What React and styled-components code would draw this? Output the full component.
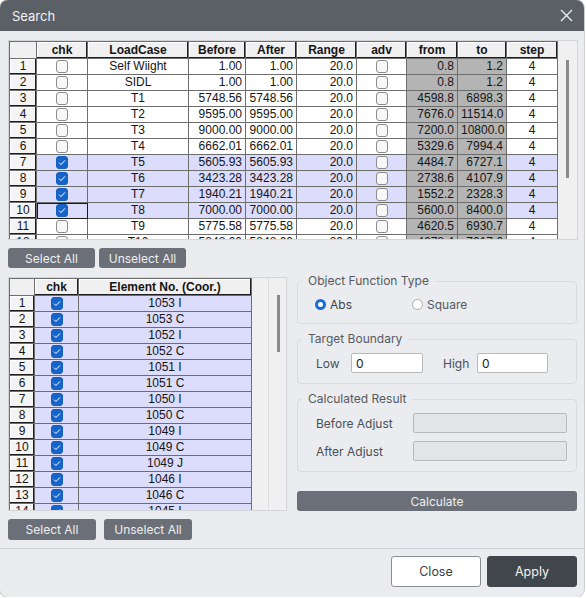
import React from "react";
import styled, { createGlobalStyle } from "styled-components";

const GlobalStyle = createGlobalStyle`
  html, body {
    margin: 0;
    padding: 0;
    background: #ffffff;
  }
  * {
    box-sizing: border-box;
  }
`;

const Window = styled.div`
  width: 584px;
  height: 597px;
  background: #ebecef;
  border-radius: 8px;
  box-shadow: 0 0 0 1px #cfd0d3;
  display: flex;
  flex-direction: column;
  overflow: hidden;
  font-family: Inter, "Noto Sans", sans-serif;
`;

const TitleBar = styled.div`
  height: 31px;
  flex: none;
  background: #5b6067;
  display: flex;
  align-items: center;
  justify-content: space-between;
  padding: 0 10px 0 12px;
  color: #f2f2f2;
  font-size: 13px;
`;

const CloseX = styled.button`
  border: 0;
  background: transparent;
  padding: 0;
  width: 16px;
  height: 16px;
  display: flex;
  align-items: center;
  justify-content: center;
  cursor: pointer;
`;

const Body = styled.div`
  padding: 9px 8px 8px 8px;
  display: flex;
  flex-direction: column;
`;

const Frame = styled.div`
  width: ${({ $w }) => $w}px;
  height: ${({ $h }) => $h}px;
  border: 1px solid #d4d5d8;
  background: #f0f0f0;
  display: flex;
  overflow: hidden;
  flex: none;
`;

const Table = styled.div`
  border-left: 1px solid #6e6e6e;
  border-top: 1px solid #6e6e6e;
  align-self: flex-start;
  background: #ffffff;
  font-family: "Liberation Sans", Arial, sans-serif;
  font-size: 12px;
  color: #151515;
`;

const Row = styled.div`
  display: grid;
  grid-template-columns: ${({ $cols }) => $cols};
  background: ${({ $sel }) => ($sel ? "#dcdcfc" : "#ffffff")};
`;

const Cell = styled.div`
  height: 16px;
  line-height: 15px;
  border-right: 1px solid #6e6e6e;
  border-bottom: 1px solid #6e6e6e;
  white-space: nowrap;
  overflow: hidden;
  padding: 0 3px;
  text-align: ${({ $align }) => $align || "center"};
  background: ${({ $shade }) => ($shade ? "#b4b4b4" : "transparent")};
  display: ${({ $box }) => ($box ? "flex" : "block")};
  align-items: center;
  justify-content: center;
  outline: ${({ $focus }) => ($focus ? "1px solid #1a1a1a" : "none")};
  outline-offset: -1px;
`;

const HeadCell = styled.div`
  height: 17px;
  line-height: 16px;
  border-right: 1px solid #6e6e6e;
  border-bottom: 1px solid #6e6e6e;
  background: #f0f0f0;
  font-weight: bold;
  text-align: center;
  white-space: nowrap;
  overflow: hidden;
  box-shadow: ${({ $plain }) =>
    $plain ? "none" : "inset -1px -1px 0 #1e1e1e, inset 1px 1px 0 #ffffff"};
`;

const RowHead = styled(HeadCell)`
  height: 16px;
  line-height: 15px;
  font-weight: normal;
  background: #f4f4f4;
`;

const Check = styled.span`
  width: 12px;
  height: 13px;
  border-radius: 3px;
  border: 1px solid ${({ $on }) => ($on ? "#1560c0" : "#8c8c8c")};
  background: ${({ $on }) => ($on ? "#1565c8" : "#f7f7f7")};
  display: flex;
  align-items: center;
  justify-content: center;
`;

const Track = styled.div`
  flex: 1;
  position: relative;
`;

const TrackLine = styled.div`
  position: absolute;
  top: 0;
  bottom: 0;
  left: ${({ $x }) => $x}px;
  width: 1px;
  background: #dedede;
`;

const Thumb = styled.div`
  position: absolute;
  left: ${({ $x }) => $x}px;
  top: ${({ $top }) => $top}px;
  height: ${({ $h }) => $h}px;
  width: 3px;
  background: #8a8a8a;
`;

const ButtonRow = styled.div`
  display: flex;
  gap: ${({ $gap }) => $gap}px;
  margin-top: 8px;
`;

const GrayButton = styled.button`
  width: ${({ $w }) => $w}px;
  height: ${({ $h }) => $h || 20}px;
  border: 0;
  border-radius: 3px;
  background: #6b7078;
  color: #eeeeee;
  font-family: Inter, "Noto Sans", sans-serif;
  font-size: 12px;
  padding: 0;
  cursor: pointer;
`;

const CalcButton = styled(GrayButton)`
  width: 280px;
  margin-top: 19px;
`;

const Lower = styled.div`
  display: flex;
  gap: 10px;
  margin-top: 9px;
`;

const LeftCol = styled.div`
  width: 279px;
  display: flex;
  flex-direction: column;
`;

const RightCol = styled.div`
  width: 280px;
  display: flex;
  flex-direction: column;
`;

const Group = styled.fieldset`
  margin: ${({ $mt }) => $mt || 0}px 0 0 0;
  padding: 10px 9px 10px 17px;
  border: 1px solid #d9dadd;
  border-radius: 4px;
  min-width: 0;
`;

const Legend = styled.legend`
  padding: 0 5px 0 6px;
  margin-left: -13px;
  font-size: 12px;
  line-height: 8px;
  color: #555a60;
`;

const RadioLine = styled.div`
  display: flex;
  align-items: center;
  height: 18px;
`;

const RadioOption = styled.label`
  width: ${({ $w }) => $w}px;
  display: flex;
  align-items: center;
  gap: 4px;
  font-size: 12px;
  color: ${({ $on }) => ($on ? "#3d4248" : "#555a60")};
`;

const RadioDot = styled.span`
  width: 11px;
  height: 11px;
  border-radius: 50%;
  background: #ffffff;
  border: ${({ $on }) => ($on ? "3px solid #1a6ed8" : "1px solid #a8a8a8")};
`;

const FieldLine = styled.div`
  display: flex;
  align-items: center;
  height: 20px;
  margin-top: ${({ $mt }) => $mt || 0}px;
`;

const FieldLabel = styled.span`
  width: ${({ $w }) => $w}px;
  font-size: 12px;
  color: #4a4f55;
  padding-left: 1px;
`;

const TextInput = styled.input`
  width: ${({ $w }) => $w}px;
  height: 20px;
  border: 1px solid #b7b9bd;
  border-radius: 2px;
  background: ${({ readOnly }) => (readOnly ? "#e3e4e7" : "#ffffff")};
  font-family: Inter, "Noto Sans", sans-serif;
  font-size: 12px;
  color: #222;
  padding: 0 4px;
  margin-right: ${({ $mr }) => $mr || 0}px;
  outline: none;
`;

const Footer = styled.div`
  border-top: 1px solid #cfd0d4;
  padding: 7px 7px 8px;
  display: flex;
  justify-content: flex-end;
  gap: 6px;
`;

const FooterButton = styled.button`
  width: 90px;
  height: 31px;
  border-radius: 3px;
  border: 1px solid ${({ $primary }) => ($primary ? "#41464d" : "#8c8e92")};
  background: ${({ $primary }) => ($primary ? "#41464d" : "#ffffff")};
  color: ${({ $primary }) => ($primary ? "#f2f2f2" : "#3a3f45")};
  font-family: Inter, "Noto Sans", sans-serif;
  font-size: 12.5px;
  cursor: pointer;
`;

const topCols = "27px 51px 101px 57px 51px 60px 50px 51px 49px 51px";
const lowCols = "25px 44px 173px";

const loadCases = [
  ["Self Wiight", "1.00", "1.00", "0.8", "1.2"],
  ["SIDL", "1.00", "1.00", "0.8", "1.2"],
  ["T1", "5748.56", "5748.56", "4598.8", "6898.3"],
  ["T2", "9595.00", "9595.00", "7676.0", "11514.0"],
  ["T3", "9000.00", "9000.00", "7200.0", "10800.0"],
  ["T4", "6662.01", "6662.01", "5329.6", "7994.4"],
  ["T5", "5605.93", "5605.93", "4484.7", "6727.1", true],
  ["T6", "3423.28", "3423.28", "2738.6", "4107.9", true],
  ["T7", "1940.21", "1940.21", "1552.2", "2328.3", true],
  ["T8", "7000.00", "7000.00", "5600.0", "8400.0", true],
  ["T9", "5775.58", "5775.58", "4620.5", "6930.7"],
  ["T10", "5848.00", "5848.00", "4678.4", "7017.6"]
];

const elements = [
  "1053 I", "1053 C", "1052 I", "1052 C", "1051 I", "1051 C", "1050 I",
  "1050 C", "1049 I", "1049 C", "1049 J", "1046 I", "1046 C", "1045 I"
];

function CheckBox({ on }) {
  return (
    <Check $on={on}>
      {on && (
        <svg width="8" height="7" viewBox="0 0 8 7">
          <polyline points="1,3.6 3,5.6 7,1.4" fill="none" stroke="#ffffff" strokeWidth="1" />
        </svg>
      )}
    </Check>
  );
}

function LoadCaseGrid() {
  return (
    <Frame $w={570} $h={200}>
      <Table>
        <Row $cols={topCols}>
          <HeadCell $plain />
          <HeadCell>chk</HeadCell>
          <HeadCell>LoadCase</HeadCell>
          <HeadCell>Before</HeadCell>
          <HeadCell>After</HeadCell>
          <HeadCell>Range</HeadCell>
          <HeadCell>adv</HeadCell>
          <HeadCell>from</HeadCell>
          <HeadCell>to</HeadCell>
          <HeadCell>step</HeadCell>
        </Row>
        {loadCases.map(([name, before, after, from, to, sel], i) => (
          <Row key={name} $cols={topCols} $sel={sel}>
            <RowHead>{i + 1}</RowHead>
            <Cell $box $focus={i === 9}><CheckBox on={!!sel} /></Cell>
            <Cell>{name}</Cell>
            <Cell $align="right">{before}</Cell>
            <Cell $align="right">{after}</Cell>
            <Cell $align="right">20.0</Cell>
            <Cell $box><CheckBox on={false} /></Cell>
            <Cell $align="right" $shade>{from}</Cell>
            <Cell $align="right" $shade>{to}</Cell>
            <Cell>4</Cell>
          </Row>
        ))}
      </Table>
      <Track>
        <Thumb $x={8} $top={19} $h={118} />
      </Track>
    </Frame>
  );
}

function ElementGrid() {
  return (
    <Frame $w={279} $h={234}>
      <Table>
        <Row $cols={lowCols}>
          <HeadCell $plain />
          <HeadCell>chk</HeadCell>
          <HeadCell>Element No. (Coor.)</HeadCell>
        </Row>
        {elements.map((el, i) => (
          <Row key={el} $cols={lowCols} $sel>
            <RowHead>{i + 1}</RowHead>
            <Cell $box><CheckBox on /></Cell>
            <Cell>{el}</Cell>
          </Row>
        ))}
      </Table>
      <Track>
        <TrackLine $x={16} />
        <Thumb $x={25} $top={17} $h={57} />
      </Track>
    </Frame>
  );
}

function SettingsPanel() {
  return (
    <RightCol>
      <Group>
        <Legend>Object Function Type</Legend>
        <RadioLine>
          <RadioOption $w={97} $on>
            <RadioDot $on />
            Abs
          </RadioOption>
          <RadioOption $w={120}>
            <RadioDot />
            Square
          </RadioOption>
        </RadioLine>
      </Group>
      <Group $mt={11}>
        <Legend>Target Boundary</Legend>
        <FieldLine>
          <FieldLabel $w={36}>Low</FieldLabel>
          <TextInput $w={72} $mr={19} defaultValue="0" />
          <FieldLabel $w={35}>High</FieldLabel>
          <TextInput $w={71} defaultValue="0" />
        </FieldLine>
      </Group>
      <Group $mt={11}>
        <Legend>Calculated Result</Legend>
        <FieldLine>
          <FieldLabel $w={99}>Before Adjust</FieldLabel>
          <TextInput $w={154} readOnly />
        </FieldLine>
        <FieldLine $mt={8}>
          <FieldLabel $w={99}>After Adjust</FieldLabel>
          <TextInput $w={154} readOnly />
        </FieldLine>
      </Group>
      <CalcButton>Calculate</CalcButton>
    </RightCol>
  );
}

export default function App() {
  return (
    <>
      <GlobalStyle />
      <Window>
        <TitleBar>
          Search
          <CloseX aria-label="close">
            <svg width="13" height="13" viewBox="0 0 13 13">
              <path d="M1 1 L12 12 M12 1 L1 12" stroke="#f0f0f0" strokeWidth="1.3" />
            </svg>
          </CloseX>
        </TitleBar>
        <Body>
          <LoadCaseGrid />
          <ButtonRow $gap={4}>
            <GrayButton $w={87}>Select All</GrayButton>
            <GrayButton $w={87}>Unselect All</GrayButton>
          </ButtonRow>
          <Lower>
            <LeftCol>
              <ElementGrid />
              <ButtonRow $gap={8}>
                <GrayButton $w={88} $h={21}>Select All</GrayButton>
                <GrayButton $w={88} $h={21}>Unselect All</GrayButton>
              </ButtonRow>
            </LeftCol>
            <SettingsPanel />
          </Lower>
        </Body>
        <Footer>
          <FooterButton>Close</FooterButton>
          <FooterButton $primary>Apply</FooterButton>
        </Footer>
      </Window>
    </>
  );
}
